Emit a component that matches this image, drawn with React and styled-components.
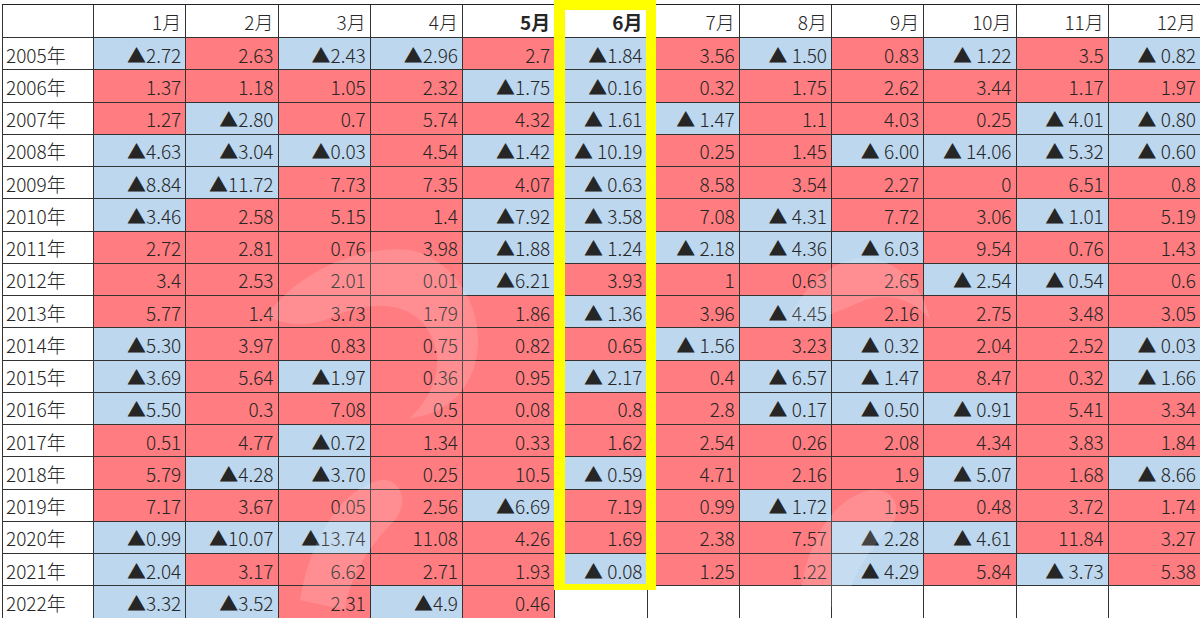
import React from "react";
import styled, { createGlobalStyle } from "styled-components";

const Global = createGlobalStyle`
  html, body { margin: 0; padding: 0; background: #fff; }
  body { width: 1200px; height: 618px; overflow: hidden; }
`;

const Page = styled.div`
  position: relative;
  width: 1200px;
  height: 618px;
  padding: 4px 0 0 2px;
  box-sizing: border-box;
  font-family: "Noto Sans CJK JP", "Noto Sans", sans-serif;
  color: #262626;
`;

const Table = styled.div`
  display: grid;
  grid-template-columns: 91px repeat(12, 1fr);
  grid-template-rows: 33px repeat(18, 32.25px);
  border-top: 1.5px solid #222;
  border-left: 1px solid #333;
  width: 1198px;
`;

const Cell = styled.div`
  display: flex;
  align-items: center;
  justify-content: ${(p) => (p.$left ? "flex-start" : "flex-end")};
  padding: ${(p) => (p.$left ? "1px 0 0 3px" : "1px 4px 0 0")};
  box-sizing: border-box;
  border-right: 1px solid #333;
  border-bottom: 1px solid #333;
  font-size: 19px;
  line-height: 1;
  white-space: pre;
  font-weight: ${(p) => (p.$bold ? 700 : 300)};
  background: ${(p) =>
    p.$tone === "r" ? "#ff7c80" : p.$tone === "b" ? "#bdd7ee" : "#fff"};
`;

const Watermark = styled.svg`
  position: absolute;
  left: 0;
  top: 0;
  width: 1200px;
  height: 618px;
  pointer-events: none;
`;

const Highlight = styled.div`
  position: absolute;
  left: 554px;
  top: 0;
  width: 102px;
  height: 590px;
  box-sizing: border-box;
  border: 11px solid #ffff00;
  border-top-width: 10px;
  border-bottom-width: 6px;
  border-right-width: 10px;
  pointer-events: none;
`;

const months = ["1月", "2月", "3月", "4月", "5月", "6月", "7月", "8月", "9月", "10月", "11月", "12月"];

const raw = [
  ["2005年", "b▲2.72", "r2.63", "b▲2.43", "b▲2.96", "r2.7", "b▲1.84", "r3.56", "b▲ 1.50", "r0.83", "b▲ 1.22", "r3.5", "b▲ 0.82"],
  ["2006年", "r1.37", "r1.18", "r1.05", "r2.32", "b▲1.75", "b▲0.16", "r0.32", "r1.75", "r2.62", "r3.44", "r1.17", "r1.97"],
  ["2007年", "r1.27", "b▲2.80", "r0.7", "r5.74", "r4.32", "b▲ 1.61", "b▲ 1.47", "r1.1", "r4.03", "r0.25", "b▲ 4.01", "b▲ 0.80"],
  ["2008年", "b▲4.63", "b▲3.04", "b▲0.03", "r4.54", "b▲1.42", "b▲ 10.19", "r0.25", "r1.45", "b▲ 6.00", "b▲ 14.06", "b▲ 5.32", "b▲ 0.60"],
  ["2009年", "b▲8.84", "b▲11.72", "r7.73", "r7.35", "r4.07", "b▲ 0.63", "r8.58", "r3.54", "r2.27", "r0", "r6.51", "r0.8"],
  ["2010年", "b▲3.46", "r2.58", "r5.15", "r1.4", "b▲7.92", "b▲ 3.58", "r7.08", "b▲ 4.31", "r7.72", "r3.06", "b▲ 1.01", "r5.19"],
  ["2011年", "r2.72", "r2.81", "r0.76", "r3.98", "b▲1.88", "b▲ 1.24", "b▲ 2.18", "b▲ 4.36", "b▲ 6.03", "r9.54", "r0.76", "r1.43"],
  ["2012年", "r3.4", "r2.53", "r2.01", "r0.01", "b▲6.21", "r3.93", "r1", "r0.63", "r2.65", "b▲ 2.54", "b▲ 0.54", "r0.6"],
  ["2013年", "r5.77", "r1.4", "r3.73", "r1.79", "r1.86", "b▲ 1.36", "r3.96", "b▲ 4.45", "r2.16", "r2.75", "r3.48", "r3.05"],
  ["2014年", "b▲5.30", "r3.97", "r0.83", "r0.75", "r0.82", "r0.65", "b▲ 1.56", "r3.23", "b▲ 0.32", "r2.04", "r2.52", "b▲ 0.03"],
  ["2015年", "b▲3.69", "r5.64", "b▲1.97", "r0.36", "r0.95", "b▲ 2.17", "r0.4", "b▲ 6.57", "b▲ 1.47", "r8.47", "r0.32", "b▲ 1.66"],
  ["2016年", "b▲5.50", "r0.3", "r7.08", "r0.5", "r0.08", "r0.8", "r2.8", "b▲ 0.17", "b▲ 0.50", "b▲ 0.91", "r5.41", "r3.34"],
  ["2017年", "r0.51", "r4.77", "b▲0.72", "r1.34", "r0.33", "r1.62", "r2.54", "r0.26", "r2.08", "r4.34", "r3.83", "r1.84"],
  ["2018年", "r5.79", "b▲4.28", "b▲3.70", "r0.25", "r10.5", "b▲ 0.59", "r4.71", "r2.16", "r1.9", "b▲ 5.07", "r1.68", "b▲ 8.66"],
  ["2019年", "r7.17", "r3.67", "r0.05", "r2.56", "b▲6.69", "r7.19", "r0.99", "b▲ 1.72", "r1.95", "r0.48", "r3.72", "r1.74"],
  ["2020年", "b▲0.99", "b▲10.07", "b▲13.74", "r11.08", "r4.26", "r1.69", "r2.38", "r7.57", "b▲ 2.28", "b▲ 4.61", "r11.84", "r3.27"],
  ["2021年", "b▲2.04", "r3.17", "r6.62", "r2.71", "r1.93", "b▲ 0.08", "r1.25", "r1.22", "b▲ 4.29", "r5.84", "b▲ 3.73", "r5.38"],
  ["2022年", "b▲3.32", "b▲3.52", "r2.31", "b▲4.9", "r0.46", "", "", "", "", "", "", ""],
];

export default function App() {
  return (
    <Page>
      <Global />
      <Table>
        <Cell $left />
        {months.map((m, i) => (
          <Cell key={m} $bold={i === 4 || i === 5}>
            {m}
          </Cell>
        ))}
        {raw.map((row) => (
          <React.Fragment key={row[0]}>
            <Cell $left>{row[0]}</Cell>
            {row.slice(1).map((v, i) => (
              <Cell key={i} $tone={v ? v[0] : ""}>
                {v ? v.slice(1) : ""}
              </Cell>
            ))}
          </React.Fragment>
        ))}
      </Table>
      <Watermark viewBox="0 0 1200 618">
        <g fill="#ffffff" opacity="0.14">
          <path d="M266 316 C300 270 360 245 410 250 C450 258 480 300 478 345 C475 390 445 415 410 418 C440 390 448 350 420 320 C395 298 360 305 330 318 C300 330 280 322 266 316 Z" />
          <path d="M788 320 C805 285 835 255 870 258 C900 262 925 290 930 320 C915 300 890 292 865 300 C840 310 815 325 788 320 Z" />
          <path d="M300 600 C310 540 340 490 380 480 C400 478 410 500 395 520 C370 545 350 575 345 610 Z" />
          <path d="M800 600 C805 545 830 500 870 490 C895 488 905 510 888 530 C865 555 850 580 845 610 Z" />
        </g>
      </Watermark>
      <Highlight />
    </Page>
  );
}
